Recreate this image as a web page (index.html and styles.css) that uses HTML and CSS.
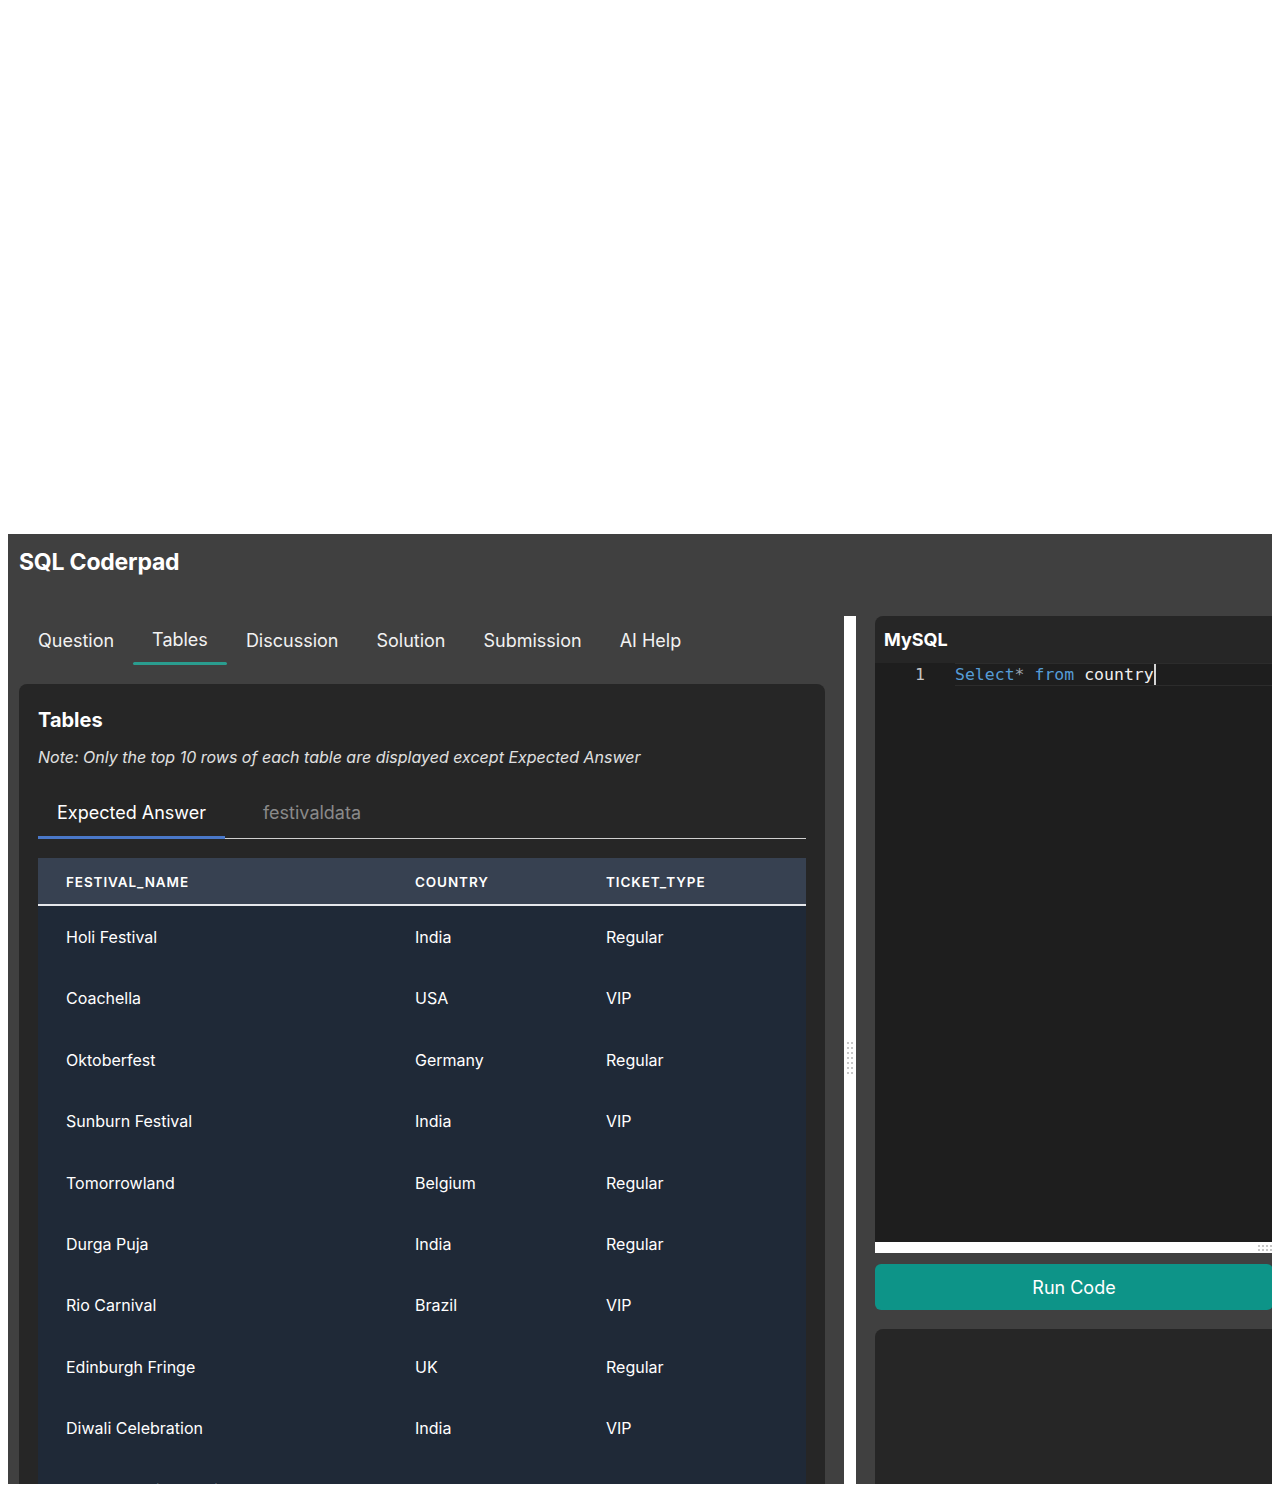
FILE: index.html
```html
<!DOCTYPE html>
<html lang="en">
<head>
<meta charset="utf-8">
<title>SQL Coderpad</title>
<link rel="stylesheet" href="styles.css">
</head>
<body>
<div class="spacer"></div>
<div class="app">
  <header class="app-header">
    <h1 class="app-title">SQL Coderpad</h1>
  </header>
  <div class="main">
    <section class="left">
      <nav class="tabs">
        <span class="tab">Question</span>
        <span class="tab active">Tables</span>
        <span class="tab">Discussion</span>
        <span class="tab">Solution</span>
        <span class="tab">Submission</span>
        <span class="tab">AI Help</span>
      </nav>
      <div class="card">
        <h2 class="card-title">Tables</h2>
        <p class="note">Note: Only the top 10 rows of each table are displayed except Expected Answer</p>
        <div class="subtabs">
          <span class="subtab active">Expected Answer</span>
          <span class="subtab">festivaldata</span>
        </div>
        <table class="data">
          <thead>
            <tr><th class="c1">FESTIVAL_NAME</th><th class="c2">COUNTRY</th><th class="c3">TICKET_TYPE</th></tr>
          </thead>
          <tbody>
            <tr><td>Holi Festival</td><td>India</td><td>Regular</td></tr>
            <tr><td>Coachella</td><td>USA</td><td>VIP</td></tr>
            <tr><td>Oktoberfest</td><td>Germany</td><td>Regular</td></tr>
            <tr><td>Sunburn Festival</td><td>India</td><td>VIP</td></tr>
            <tr><td>Tomorrowland</td><td>Belgium</td><td>Regular</td></tr>
            <tr><td>Durga Puja</td><td>India</td><td>Regular</td></tr>
            <tr><td>Rio Carnival</td><td>Brazil</td><td>VIP</td></tr>
            <tr><td>Edinburgh Fringe</td><td>UK</td><td>Regular</td></tr>
            <tr><td>Diwali Celebration</td><td>India</td><td>VIP</td></tr>
            <tr><td>Sundance Film Festival</td><td>USA</td><td>Regular</td></tr>
          </tbody>
        </table>
      </div>
    </section>
    <div class="vsplit">
      <svg class="grip-v" width="6" height="36" viewBox="0 0 6 36" aria-hidden="true">
        <g fill="#c8c8c8">
          <rect x="0" y="0" width="2" height="2"/><rect x="4" y="0" width="2" height="2"/>
          <rect x="0" y="5" width="2" height="2"/><rect x="4" y="5" width="2" height="2"/>
          <rect x="0" y="10" width="2" height="2"/><rect x="4" y="10" width="2" height="2"/>
          <rect x="0" y="15" width="2" height="2"/><rect x="4" y="15" width="2" height="2"/>
          <rect x="0" y="20" width="2" height="2"/><rect x="4" y="20" width="2" height="2"/>
          <rect x="0" y="25" width="2" height="2"/><rect x="4" y="25" width="2" height="2"/>
          <rect x="0" y="30" width="2" height="2"/><rect x="4" y="30" width="2" height="2"/>
        </g>
      </svg>
    </div>
    <section class="right">
      <div class="editor">
        <div class="editor-head">MySQL</div>
        <div class="editor-body">
          <div class="code-line">
            <span class="ln">1</span>
            <div class="code"><span class="kw">Select</span><span class="op">*</span> <span class="kw">from</span> <span class="id">country</span><span class="cursor"></span></div>
          </div>
        </div>
      </div>
      <div class="hsplit">
        <svg class="grip-h" width="18" height="6" viewBox="0 0 18 6" aria-hidden="true">
          <g fill="#c8c8c8">
            <rect x="0" y="0" width="2" height="2"/><rect x="4" y="0" width="2" height="2"/><rect x="8" y="0" width="2" height="2"/><rect x="12" y="0" width="2" height="2"/><rect x="16" y="0" width="2" height="2"/>
            <rect x="0" y="4" width="2" height="2"/><rect x="4" y="4" width="2" height="2"/><rect x="8" y="4" width="2" height="2"/><rect x="12" y="4" width="2" height="2"/><rect x="16" y="4" width="2" height="2"/>
          </g>
        </svg>
      </div>
      <button class="run">Run Code</button>
      <div class="output"></div>
    </section>
  </div>
</div>
</body>
</html>
```
FILE: styles.css
```css
* { box-sizing: border-box; }
html, body { background: #ffffff; }
body {
  margin: 8px;
  font-family: Inter, "Liberation Sans", Arial, sans-serif;
  color: #ffffff;
}
.spacer { height: 526px; }
.app {
  width: 1268px;
  height: 950px;
  background: #404040;
  overflow: hidden;
  display: flex;
  flex-direction: column;
}
.app-header {
  height: 82px;
  padding: 14px 11px 0;
  flex: none;
}
.app-title {
  margin: 0;
  font-size: 23px;
  line-height: 28px;
  font-weight: 700;
  letter-spacing: -0.2px;
}
.main {
  flex: 1;
  display: flex;
  min-height: 0;
  padding-left: 11px;
}
.left {
  width: 806px;
  flex: none;
  display: flex;
  flex-direction: column;
}
.tabs {
  display: flex;
  height: 50px;
}
.tab {
  position: relative;
  padding: 0 19px;
  font-size: 18px;
  line-height: 50px;
  color: #f2f2f2;
}
.tab.active {
  line-height: 48px;
}
.tab.active::after {
  content: "";
  position: absolute;
  left: 0;
  right: 0;
  bottom: 1px;
  height: 3px;
  border-radius: 2px;
  background: #2a9d8f;
}
.card {
  margin-top: 18px;
  flex: 1;
  background: #262626;
  border-radius: 8px 8px 0 0;
  padding: 23px 19px 0;
  overflow: hidden;
}
.card-title {
  margin: 0;
  font-size: 20px;
  line-height: 26px;
  font-weight: 700;
}
.note {
  margin: 13px 0 0;
  font-size: 16px;
  line-height: 22px;
  font-style: italic;
  color: #e0e0e0;
}
.subtabs {
  margin-top: 22px;
  display: flex;
  gap: 19px;
  border-bottom: 1px solid #d0d0d0;
  height: 49px;
}
.subtab {
  position: relative;
  padding: 0 19px;
  font-size: 18px;
  line-height: 46px;
  color: #8a8a8a;
}
.subtab.active { color: #ffffff; }
.subtab.active::after {
  content: "";
  position: absolute;
  left: 0;
  right: 0;
  bottom: -1px;
  height: 3px;
  background: #4a78c9;
}
.data {
  margin-top: 19px;
  width: 100%;
  border-collapse: collapse;
  table-layout: fixed;
  font-size: 16px;
}
.data th {
  background: #374151;
  text-align: left;
  font-size: 13.5px;
  font-weight: 600;
  letter-spacing: 0.9px;
  height: 47px;
  padding: 1px 28px 0;
  border-bottom: 2px solid #e5e7eb;
  color: #ffffff;
}
.data .c1 { width: 349px; }
.data .c2 { width: 191px; }
.data td {
  background: #1f2937;
  padding: 21px 28px 19px;
  line-height: 21.4px;
  color: #ffffff;
}
.vsplit {
  width: 12px;
  flex: none;
  margin-left: 19px;
  background: #ffffff;
  display: flex;
  align-items: center;
  justify-content: center;
  padding-top: 20px;
}
.right {
  margin-left: 19px;
  width: 401px;
  flex: none;
  display: flex;
  flex-direction: column;
}
.editor {
  height: 626px;
  flex: none;
  display: flex;
  flex-direction: column;
  border-radius: 8px 0 0 0;
  overflow: hidden;
}
.editor-head {
  height: 47px;
  background: #262626;
  padding: 0 9px;
  font-size: 18px;
  font-weight: 700;
  line-height: 47px;
}
.editor-body {
  flex: 1;
  background: #1e1e1e;
}
.code-line {
  display: flex;
  height: 23px;
  align-items: center;
}
.ln {
  width: 50px;
  text-align: right;
  font-family: "DejaVu Sans Mono", "Liberation Mono", monospace;
  font-size: 16.5px;
  color: #c6c6c6;
  flex: none;
}
.code {
  margin-left: 30px;
  flex: 1;
  height: 23px;
  line-height: 21px;
  border-top: 1px solid #2c2c2c;
  border-bottom: 1px solid #2c2c2c;
  font-family: "DejaVu Sans Mono", "Liberation Mono", monospace;
  font-size: 16.5px;
  white-space: pre;
}
.kw { color: #569cd6; }
.op { color: #9aa3ad; }
.id { color: #f0f0f0; }
.cursor {
  display: inline-block;
  width: 2px;
  height: 21px;
  vertical-align: top;
  background: #d4d4d4;
}
.hsplit {
  height: 11px;
  flex: none;
  background: #ffffff;
  display: flex;
  justify-content: flex-end;
  align-items: center;
}
.grip-h { margin-right: 0; }
.run {
  margin-top: 11px;
  width: 398px;
  height: 46px;
  flex: none;
  border: none;
  border-radius: 6px;
  background: #0d9488;
  color: #ffffff;
  font-family: Inter, "Liberation Sans", Arial, sans-serif;
  font-size: 18px;
}
.output {
  margin-top: 19px;
  flex: 1;
  background: #262626;
  border-radius: 8px 0 0 0;
}
```
